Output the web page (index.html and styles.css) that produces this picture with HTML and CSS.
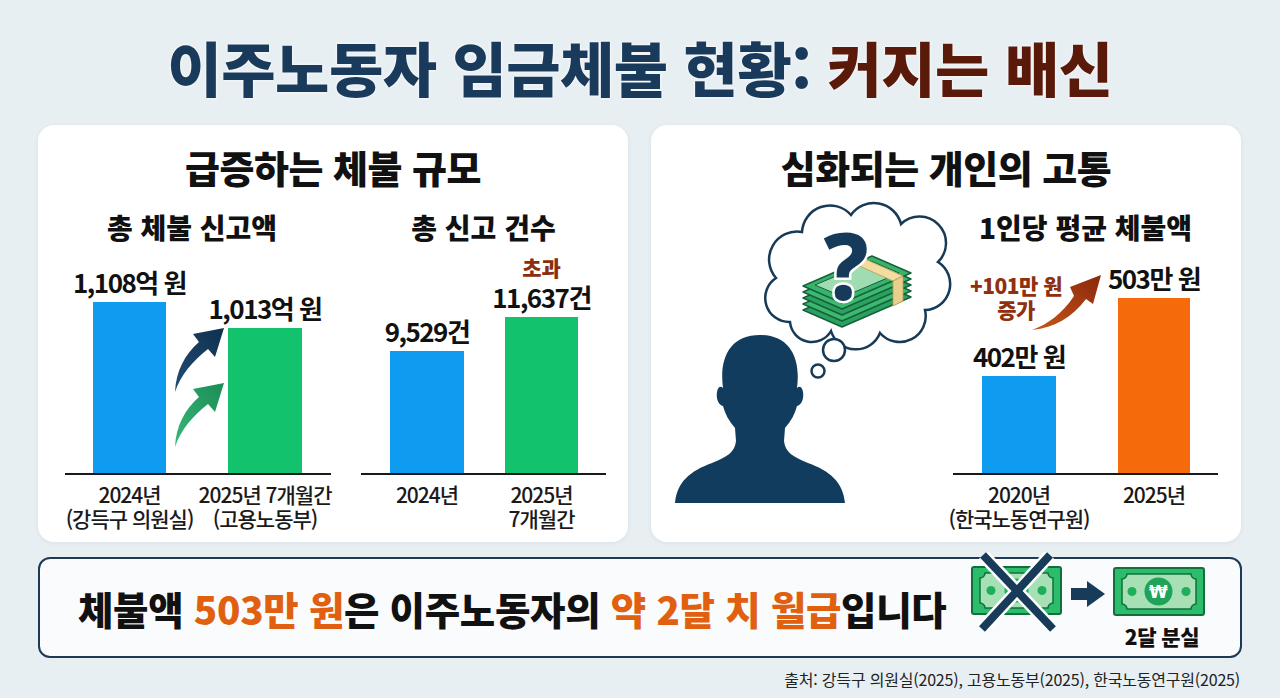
FILE: index.html
```html
<!DOCTYPE html>
<html lang="ko">
<head>
<meta charset="utf-8">
<title>이주노동자 임금체불 현황</title>
<link rel="stylesheet" href="styles.css">
</head>
<body>
<div class="page">
  <h1 class="title"><span class="t-navy">이주노동자 임금체불 현황:</span> <span class="t-brown">커지는 배신</span></h1>

  <div class="cards">
    <section class="card">
      <h2 class="card-title">급증하는 체불 규모</h2>
      <div class="charts">
        <div class="chart chart-a">
          <h3 class="chart-title shift">총 체불 신고액</h3>
          <div class="plot">
            <div class="col c2">
              <div class="value"><span>1,108억 원</span></div>
              <div class="bar blue" style="height:171px"></div>
            </div>
            <svg class="swoosh c3" viewBox="166 244 62 230" width="62" height="230">
              <defs>
                <linearGradient id="gNavy" x1="0" y1="1" x2="1" y2="0">
                  <stop offset="0" stop-color="#1f4d73"/>
                  <stop offset="1" stop-color="#10304f"/>
                </linearGradient>
                <linearGradient id="gGreen" x1="0" y1="1" x2="1" y2="0">
                  <stop offset="0" stop-color="#36b878"/>
                  <stop offset="1" stop-color="#1b8c55"/>
                </linearGradient>
              </defs>
              <path d="M175 393 C176 372 185 355 199 343 L193 335 L224 329 L215 358 L208 350 C193 362 181 375 175 393 Z" fill="url(#gNavy)"/>
              <path d="M175 448 C176 427 185 410 199 398 L193 390 L224 384 L215 413 L208 405 C193 417 181 430 175 448 Z" fill="url(#gGreen)"/>
            </svg>
            <div class="col c4">
              <div class="value"><span>1,013억 원</span></div>
              <div class="bar green" style="height:145px"></div>
            </div>
          </div>
          <div class="axis">
            <div class="xl c2"><span>2024년<br>(강득구 의원실)</span></div>
            <div class="xl c4"><span>2025년 7개월간<br>(고용노동부)</span></div>
          </div>
        </div>

        <div class="chart chart-b">
          <h3 class="chart-title">총 신고 건수</h3>
          <div class="plot">
            <div class="col c2">
              <div class="value"><span>9,529건</span></div>
              <div class="bar blue" style="height:122px"></div>
            </div>
            <div class="col c4">
              <div class="note"><span>초과</span></div>
              <div class="value"><span>11,637건</span></div>
              <div class="bar green" style="height:156px"></div>
            </div>
          </div>
          <div class="axis">
            <div class="xl c2"><span>2024년</span></div>
            <div class="xl c4"><span>2025년<br>7개월간</span></div>
          </div>
        </div>
      </div>
    </section>

    <section class="card">
      <h2 class="card-title">심화되는 개인의 고통</h2>
      <div class="pain">
        <svg class="illus" viewBox="665 189 288 339" width="288" height="339">
          <path d="M790 322 A24 24 0 0 1 776 278 A28 28 0 0 1 802 232 A28 28 0 0 1 851 215 A28 28 0 0 1 901 224 A26 26 0 0 1 938 262 A26 26 0 0 1 925 310 A26 26 0 0 1 880 333 A26 26 0 0 1 831 331 A22 22 0 0 1 790 322 Z" fill="#fff" stroke="#173a57" stroke-width="2.5"/>
          <circle cx="834" cy="350" r="11" fill="#fff" stroke="#173a57" stroke-width="2.5"/>
          <circle cx="818" cy="371" r="6.5" fill="#fff" stroke="#173a57" stroke-width="2.5"/>
          <g stroke="#15603a" stroke-width="1.4" stroke-linejoin="round">
            <polygon points="803,310 872,280 911,297 842,327" fill="#2aa15e"/>
            <polygon points="803,304 872,274 911,291 842,321" fill="#3cb86f"/>
            <polygon points="803,298 872,268 911,285 842,315" fill="#2aa15e"/>
            <polygon points="803,292 872,262 911,279 842,309" fill="#3cb86f"/>
            <polygon points="803,286 872,256 911,273 842,303" fill="#37b46c"/>
            <polygon points="815,285 871,261 899,273 843,297" fill="#9fdcb1" stroke-width="1"/>
          </g>
          <polygon points="855,264 865,259 903,276 893,281" fill="#f3dca0" stroke="#b89a55" stroke-width="0.8"/>
          <polygon points="893,281 903,276 903,301 893,306" fill="#e9cf8c" stroke="#b89a55" stroke-width="0.8"/>
          <text x="846" y="300" class="qmark">?</text>
          <path d="M675 503 C677 482 690 471 712 463 C727 457 735 452 736 441 L735 428 C729 421 725 414 723 406 C718 405 716 398 717 392 C718 386 721 386 723 388 C719 358 730 335 760 335 C790 335 801 358 797 388 C799 386 802 386 803 392 C804 398 802 405 797 406 C795 414 791 421 785 428 L784 441 C785 452 793 457 808 463 C830 471 843 482 845 503 Z" fill="#123c5d"/>
        </svg>

        <div class="chart chart-c">
          <h3 class="chart-title">1인당 평균 체불액</h3>
          <div class="plot">
            <div class="col c2">
              <div class="value"><span>402만 원</span></div>
              <div class="bar blue" style="height:97px"></div>
            </div>
            <div class="col c4">
              <div class="value"><span>503만 원</span></div>
              <div class="bar orange" style="height:175px"></div>
            </div>
            <svg class="overlay" viewBox="953 244 265 230" width="265" height="230">
              <defs>
                <linearGradient id="gBrown" x1="0" y1="1" x2="1" y2="0">
                  <stop offset="0" stop-color="#c9561b"/>
                  <stop offset="1" stop-color="#8a280b"/>
                </linearGradient>
              </defs>
              <path d="M1032 331 C1048 325 1062 315 1074 297 L1070 288 L1101 276 L1093 305 L1086 300 C1072 318 1055 329 1032 331 Z" fill="url(#gBrown)"/>
            </svg>
            <div class="increase">+101만 원<br>증가</div>
          </div>
          <div class="axis">
            <div class="xl c2"><span>2020년<br>(한국노동연구원)</span></div>
            <div class="xl c4"><span>2025년</span></div>
          </div>
        </div>
      </div>
    </section>
  </div>

  <div class="banner">
    <p class="banner-text">체불액 <em>503만 원</em>은 이주노동자의 <em>약 2달 치 월급</em>입니다</p>
    <div class="loss">
      <svg class="loss-icons" viewBox="963 552 247 80" width="247" height="80">
        <g transform="translate(971 566)">
          <rect x="1" y="1" width="89" height="47" rx="2" fill="#2bbd6a" stroke="#136e3e" stroke-width="2"/>
          <path d="M14 7 H77 A5 5 0 0 0 82 12 V37 A5 5 0 0 0 77 42 H14 A5 5 0 0 0 9 37 V12 A5 5 0 0 0 14 7 Z" fill="#a7e0b5" stroke="#136e3e" stroke-width="1.5"/>
          <circle cx="20" cy="24.5" r="4.5" fill="#1fae5c"/>
          <circle cx="71" cy="24.5" r="4.5" fill="#1fae5c"/>
          <circle cx="45.5" cy="24.5" r="12" fill="#1fae5c"/>
        </g>
        <g stroke-linecap="butt">
          <line x1="983" y1="555" x2="1053" y2="629" stroke="#fff" stroke-width="13"/>
          <line x1="1050" y1="555" x2="982" y2="629" stroke="#fff" stroke-width="13"/>
          <line x1="983" y1="555" x2="1053" y2="629" stroke="#183b59" stroke-width="8"/>
          <line x1="1050" y1="555" x2="982" y2="629" stroke="#183b59" stroke-width="8"/>
        </g>
        <rect x="1071" y="588" width="18" height="12" fill="#183b59"/>
        <polygon points="1087,581 1105,594 1087,607" fill="#183b59"/>
        <g transform="translate(1113 567)">
          <rect x="1" y="1" width="90" height="47" rx="2" fill="#2bbd6a" stroke="#136e3e" stroke-width="2"/>
          <path d="M14 7 H78 A5 5 0 0 0 83 12 V37 A5 5 0 0 0 78 42 H14 A5 5 0 0 0 9 37 V12 A5 5 0 0 0 14 7 Z" fill="#a7e0b5" stroke="#136e3e" stroke-width="1.5"/>
          <circle cx="19" cy="24.5" r="4.5" fill="#1fae5c"/>
          <circle cx="73" cy="24.5" r="4.5" fill="#1fae5c"/>
          <circle cx="45.5" cy="24.5" r="14" fill="#1fa35a"/>
          <text x="45.5" y="30.5" class="won">₩</text>
        </g>
      </svg>
      <div class="loss-label">2달 분실</div>
    </div>
  </div>

  <p class="source">출처: 강득구 의원실(2025), 고용노동부(2025), 한국노동연구원(2025)</p>
</div>
</body>
</html>
```

FILE: styles.css
```css
* {
  box-sizing: border-box;
  margin: 0;
  padding: 0;
}

body {
  width: 1280px;
  height: 698px;
  overflow: hidden;
  background: #e8eff3;
  font-family: "Noto Sans CJK KR", "Noto Sans", sans-serif;
  color: #111;
}

.page {
  width: 1280px;
}

.title {
  padding-top: 31px;
  height: 125px;
  font-size: 59px;
  line-height: 72px;
  font-weight: 900;
  letter-spacing: -0.5px;
  text-align: center;
  white-space: nowrap;
  text-shadow: 0 0 3px #fff, 0 0 1px #fff;
}

.t-navy {
  color: #193a5a;
}

.t-brown {
  color: #5a1a0a;
}

.cards {
  display: flex;
  gap: 23px;
  padding: 0 39px 0 38px;
  height: 417px;
}

.card {
  flex: 1;
  background: #fff;
  border-radius: 16px;
  box-shadow: 0 1px 4px rgba(30, 60, 90, 0.08);
  padding-top: 20px;
}

.card-title {
  font-size: 38px;
  line-height: 44px;
  font-weight: 900;
  text-align: center;
  letter-spacing: -0.5px;
}

.charts {
  display: flex;
  gap: 30px;
  padding-left: 27px;
}

.chart-title {
  margin-top: 22px;
  font-size: 28px;
  line-height: 32px;
  font-weight: 900;
  text-align: center;
  white-space: nowrap;
}

.chart-title.shift {
  padding-right: 12px;
}

.plot,
.axis {
  display: grid;
}

.chart-a .plot,
.chart-a .axis {
  width: 266px;
  grid-template-columns: 28px 73px 62px 74px 29px;
}

.chart-b .plot,
.chart-b .axis {
  width: 245px;
  grid-template-columns: 29px 74px 41px 73px 28px;
}

.chart-c .plot,
.chart-c .axis {
  width: 265px;
  grid-template-columns: 29px 74px 62px 72px 28px;
}

.plot {
  height: 230px;
  align-items: end;
  position: relative;
}

.c2 {
  grid-column: 2;
  grid-row: 1;
}

.c3 {
  grid-column: 3;
  grid-row: 1;
}

.c4 {
  grid-column: 4;
  grid-row: 1;
}

.col {
  display: flex;
  flex-direction: column;
  align-items: stretch;
}

.value,
.note,
.xl {
  display: flex;
  justify-content: center;
  white-space: nowrap;
}

.value {
  font-size: 26px;
  line-height: 30px;
  font-weight: 700;
  letter-spacing: -1.5px;
  margin-bottom: 5px;
}

.note {
  font-size: 21px;
  line-height: 24px;
  font-weight: 900;
  color: #8b2e0e;
  margin-bottom: 3px;
}

.bar {
  width: 100%;
}

.blue {
  background: #0e9bf0;
}

.green {
  background: #12c26c;
}

.orange {
  background: #f56b0c;
}

.swoosh {
  display: block;
  align-self: stretch;
}

.axis {
  border-top: 2px solid #1a1a1a;
  padding-top: 7px;
}

.xl {
  font-size: 21px;
  line-height: 24px;
  font-weight: 500;
  text-align: center;
  letter-spacing: -1px;
  color: #1a1a1a;
}

.pain {
  display: flex;
  padding-left: 14px;
}

.illus {
  display: block;
  flex: none;
}

.qmark {
  font-family: "Noto Sans", "DejaVu Sans", sans-serif;
  font-weight: 800;
  font-size: 92px;
  text-anchor: middle;
  fill: #163a5a;
  stroke: #fff;
  stroke-width: 5px;
  paint-order: stroke;
}

.overlay {
  position: absolute;
  left: 0;
  top: 0;
  pointer-events: none;
}

.increase {
  position: absolute;
  left: 14px;
  top: 30px;
  width: 98px;
  text-align: center;
  font-size: 21px;
  line-height: 24px;
  font-weight: 900;
  color: #8f300f;
  letter-spacing: -0.5px;
  white-space: nowrap;
}

.banner {
  margin: 15px 38px 0;
  height: 101px;
  border: 2px solid #1c3a56;
  border-radius: 12px;
  background: #f9fbfc;
  display: flex;
  align-items: center;
  padding: 0 30px 0 38px;
}

.banner-text {
  font-size: 38.5px;
  line-height: 46px;
  font-weight: 900;
  letter-spacing: -0.3px;
  color: #111;
  white-space: nowrap;
}

.banner-text em {
  font-style: normal;
  color: #e0600f;
}

.loss {
  margin-left: auto;
  align-self: flex-start;
  margin-top: -7px;
  display: flex;
  flex-direction: column;
  align-items: flex-end;
}

.loss-icons {
  display: block;
}

.won {
  font-family: "DejaVu Sans", sans-serif;
  font-weight: 700;
  font-size: 17px;
  text-anchor: middle;
  fill: #fff;
}

.loss-label {
  margin-top: -8px;
  margin-right: 11px;
  font-size: 21px;
  line-height: 24px;
  font-weight: 900;
  letter-spacing: -0.5px;
}

.source {
  margin-top: 11px;
  padding-right: 40px;
  text-align: right;
  font-size: 16px;
  line-height: 20px;
  color: #222;
  letter-spacing: -0.2px;
}
```
